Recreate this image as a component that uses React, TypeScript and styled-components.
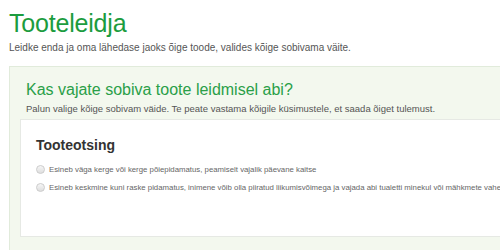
import React from 'react';
import styled, { createGlobalStyle } from 'styled-components';

const GlobalStyle = createGlobalStyle`
  html, body {
    margin: 0;
    padding: 0;
    background: #ffffff;
    overflow: hidden;
  }
  body {
    font-family: "Liberation Sans", Arial, sans-serif;
  }
`;

const Page = styled.div`
  width: 640px;
  padding: 8px 0 0 9px;
`;

const Title = styled.h1`
  margin: 0;
  font-size: 25px;
  line-height: 30px;
  font-weight: 300;
  color: #1c9c3e;
  letter-spacing: -0.2px;
`;

const Lead = styled.p`
  margin: 3px 0 0;
  font-size: 10px;
  line-height: 14px;
  color: #555555;
`;

const Panel = styled.section`
  margin-top: 11px;
  background: #f3f8ee;
  border: 1px solid #e1ebdb;
  padding: 13px 10px 20px 10px;
`;

const PanelHeading = styled.h2`
  margin: 0 0 0 6px;
  font-size: 16px;
  line-height: 20px;
  font-weight: 400;
  color: #2a9f48;
`;

const PanelText = styled.p`
  margin: 2px 0 0 6px;
  font-size: 9.5px;
  line-height: 13px;
  color: #555555;
`;

const Card = styled.div`
  margin-top: 4px;
  background: #ffffff;
  border: 1px solid #e6e9e4;
  height: 118px;
  padding: 16px 15px 0;
  box-sizing: border-box;
`;

const CardTitle = styled.h3`
  margin: 0;
  font-size: 14px;
  line-height: 18px;
  font-weight: 700;
  color: #333333;
`;

const Options = styled.div`
  margin-top: 9px;
  display: flex;
  flex-direction: column;
  gap: 5px;
`;

const Option = styled.label`
  display: flex;
  align-items: center;
  gap: 4px;
  font-size: 7.8px;
  line-height: 13px;
  color: #666666;
  white-space: nowrap;
`;

const Radio = styled.span`
  width: 7px;
  height: 7px;
  border-radius: 50%;
  border: 1px solid #cccccc;
  background: linear-gradient(#f6f6f6, #dedede);
  flex-shrink: 0;
`;

const options = [
  'Esineb väga kerge või kerge põiepidamatus, peamiselt vajalik päevane kaitse',
  'Esineb keskmine kuni raske pidamatus, inimene võib olla piiratud liikumisvõimega ja vajada abi tualetti minekul või mähkmete vahetamisel',
];

export default function App() {
  return (
    <Page>
      <GlobalStyle />
      <Title>Tooteleidja</Title>
      <Lead>Leidke enda ja oma lähedase jaoks õige toode, valides kõige sobivama väite.</Lead>
      <Panel>
        <PanelHeading>Kas vajate sobiva toote leidmisel abi?</PanelHeading>
        <PanelText>
          Palun valige kõige sobivam väide. Te peate vastama kõigile küsimustele, et saada õiget tulemust.
        </PanelText>
        <Card>
          <CardTitle>Tooteotsing</CardTitle>
          <Options>
            {options.map((o) => (
              <Option key={o}>
                <Radio />
                {o}
              </Option>
            ))}
          </Options>
        </Card>
      </Panel>
    </Page>
  );
}
